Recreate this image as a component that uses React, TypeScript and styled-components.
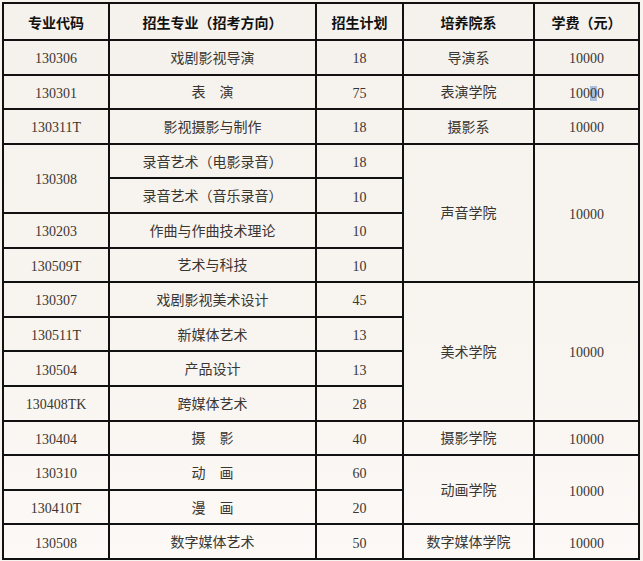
import React from 'react'
import styled, { createGlobalStyle } from 'styled-components'

const GlobalStyle = createGlobalStyle`
  html, body {
    margin: 0;
    padding: 0;
    background: #f7f3ef;
  }
  body {
    padding: 2px 0 0 2px;
  }
`

type Row = {
  code?: string
  codeSpan?: number
  major: string
  plan: string
  school?: string
  fee?: React.ReactNode
  span?: number
}

function Mark({ children }: { children: React.ReactNode }) {
  return <Sel>{children}</Sel>
}

const rows: Row[] = [
  { code: '130306', major: '戏剧影视导演', plan: '18', school: '导演系', fee: '10000' },
  {
    code: '130301',
    major: '表　演',
    plan: '75',
    school: '表演学院',
    fee: (
      <>
        100<Mark>0</Mark>0
      </>
    ),
  },
  { code: '130311T', major: '影视摄影与制作', plan: '18', school: '摄影系', fee: '10000' },
  { code: '130308', codeSpan: 2, major: '录音艺术（电影录音）', plan: '18', school: '声音学院', fee: '10000', span: 4 },
  { major: '录音艺术（音乐录音）', plan: '10' },
  { code: '130203', major: '作曲与作曲技术理论', plan: '10' },
  { code: '130509T', major: '艺术与科技', plan: '10' },
  { code: '130307', major: '戏剧影视美术设计', plan: '45', school: '美术学院', fee: '10000', span: 4 },
  { code: '130511T', major: '新媒体艺术', plan: '13' },
  { code: '130504', major: '产品设计', plan: '13' },
  { code: '130408TK', major: '跨媒体艺术', plan: '28' },
  { code: '130404', major: '摄　影', plan: '40', school: '摄影学院', fee: '10000' },
  { code: '130310', major: '动　画', plan: '60', school: '动画学院', fee: '10000', span: 2 },
  { code: '130410T', major: '漫　画', plan: '20' },
  { code: '130508', major: '数字媒体艺术', plan: '50', school: '数字媒体学院', fee: '10000' },
]

const App: React.FC = () => {
  return (
    <>
      <GlobalStyle />
      <Table>
        <colgroup>
          <col style={{ width: 106 }} />
          <col style={{ width: 207 }} />
          <col style={{ width: 87 }} />
          <col style={{ width: 131 }} />
          <col style={{ width: 105 }} />
        </colgroup>
        <thead>
          <HeadRow>
            <Th>专业代码</Th>
            <Th>招生专业（招考方向）</Th>
            <Th>招生计划</Th>
            <Th>培养院系</Th>
            <Th>学费（元）</Th>
          </HeadRow>
        </thead>
        <tbody>
          {rows.map((r, i) => (
            <BodyRow key={i}>
              {r.code && <Num rowSpan={r.codeSpan || 1}>{r.code}</Num>}
              <Td>{r.major}</Td>
              <Num>{r.plan}</Num>
              {r.school && <Td rowSpan={r.span || 1}>{r.school}</Td>}
              {r.fee && <Num rowSpan={r.span || 1}>{r.fee}</Num>}
            </BodyRow>
          ))}
        </tbody>
      </Table>
    </>
  )
}

const Table = styled.table`
  table-layout: fixed;
  border-collapse: collapse;
  width: 636px;
  background: linear-gradient(180deg, #f5f1ec 0%, #f8f4f0 60%, #fcf9f6 100%);
`

const HeadRow = styled.tr`
  height: 37px;
`

const BodyRow = styled.tr`
  height: 34.6px;
`

const Th = styled.th`
  border: 2px solid #111;
  padding: 0;
  text-align: center;
  vertical-align: middle;
  font-family: "Noto Sans CJK SC", sans-serif;
  font-weight: 700;
  font-size: 14px;
  line-height: 18px;
  color: #111;
`

const Td = styled.td`
  border: 2px solid #111;
  padding: 3px 0 0;
  text-align: center;
  vertical-align: middle;
  font-family: "Liberation Serif", "Noto Sans CJK SC", serif;
  font-size: 14px;
  line-height: 18px;
  color: #3a3632;
`

const Num = styled(Td)`
  padding-top: 4px;
`

const Sel = styled.span`
  background: rgba(110, 150, 210, 0.55);
`

export default App
